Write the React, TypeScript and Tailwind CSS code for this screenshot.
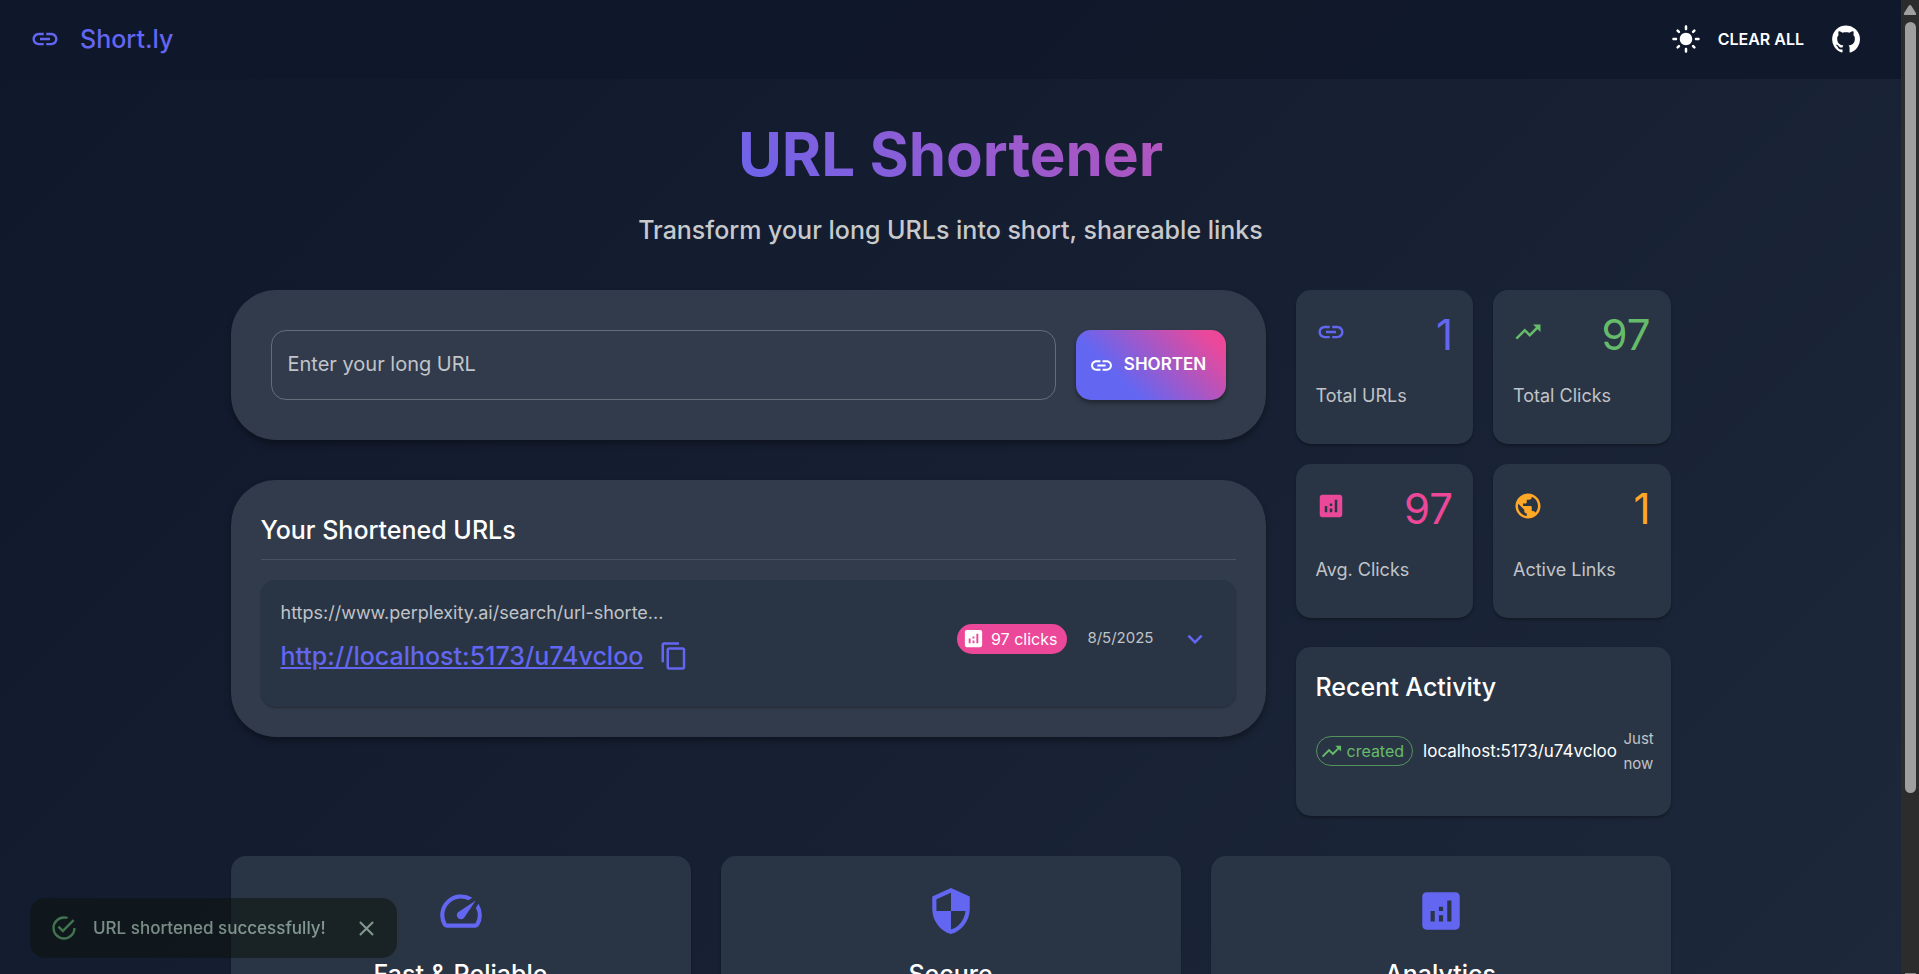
import type { ReactNode } from "react";
import {
  MdInsertLink,
  MdLightMode,
  MdTrendingUp,
  MdAnalytics,
  MdPublic,
  MdContentCopy,
  MdExpandMore,
  MdSpeed,
  MdSecurity,
  MdClose,
} from "react-icons/md";

function GitHubIcon() {
  return (
    <svg viewBox="0 0 24 24" className="size-[30px]" fill="currentColor" aria-hidden="true">
      <path d="M12 1.27a11 11 0 00-3.48 21.46c.55.09.73-.28.73-.55v-1.84c-3.03.64-3.67-1.46-3.67-1.46-.55-1.29-1.28-1.65-1.28-1.65-.92-.65.1-.65.1-.65 1.1 0 1.73 1.1 1.73 1.1.92 1.65 2.57 1.2 3.21.92a2 2 0 01.64-1.47c-2.47-.27-5.04-1.19-5.04-5.5 0-1.1.46-2.1 1.2-2.84a3.76 3.76 0 010-2.93s.91-.28 3.11 1.1c1.8-.49 3.7-.49 5.5 0 2.1-1.38 3.02-1.1 3.02-1.1a3.76 3.76 0 01.1 2.93c.83.74 1.2 1.74 1.2 2.94 0 4.21-2.57 5.13-5.04 5.4.45.37.82.92.82 2.02v3.03c0 .27.1.64.73.55A11 11 0 0012 1.27" />
    </svg>
  );
}

function SuccessIcon() {
  return (
    <svg viewBox="0 0 24 24" className="size-7 text-[#66bb6a]" fill="currentColor" aria-hidden="true">
      <path d="M20,12A8,8 0 0,1 12,20A8,8 0 0,1 4,12A8,8 0 0,1 12,4C12.76,4 13.5,4.11 14.2,4.31L15.77,2.74C14.61,2.26 13.34,2 12,2A10,10 0 0,0 2,12A10,10 0 0,0 12,22A10,10 0 0,0 22,12M7.91,10.08L6.5,11.5L11,16L21,6L19.59,4.58L11,13.17L7.91,10.08Z" />
    </svg>
  );
}

function Header() {
  return (
    <header className="flex h-[79px] items-center bg-[#0f172a]/90 px-[30px] pb-0.5">
      <div className="flex flex-1 items-center gap-5 text-[#6366f1]">
        <MdInsertLink className="size-[30px]" />
        <span className="text-[25px] leading-10 font-medium">Short.ly</span>
      </div>
      <div className="flex items-center text-white">
        <button type="button" aria-label="Toggle theme" className="flex size-[50px] items-center justify-center">
          <MdLightMode className="size-[30px]" />
        </button>
        <button type="button" className="px-[7px] text-[16px] leading-[30px] font-semibold uppercase">
          Clear All
        </button>
        <a href="https://github.com" aria-label="GitHub" className="ml-2.5 flex size-[50px] items-center justify-center">
          <GitHubIcon />
        </a>
      </div>
    </header>
  );
}

function ShortenForm() {
  return (
    <form className="flex gap-5 rounded-[45px] bg-[#323b4b] p-10 shadow-[0_4px_6px_rgba(0,0,0,0.35)]">
      <input
        type="text"
        aria-label="Enter your long URL"
        placeholder="Enter your long URL"
        className="h-[70px] min-w-0 flex-1 rounded-[15px] border border-white/25 bg-transparent px-4 pb-0.5 text-[20px] text-white placeholder:text-[#c1c4c9]"
      />
      <button
        type="button"
        className="flex w-[150px] items-center justify-center gap-2.5 rounded-[15px] bg-[linear-gradient(45deg,#6366f1_30%,#ec4899_90%)] pr-1.5 text-[17px] font-semibold text-white uppercase shadow-[0_3px_4px_rgba(0,0,0,0.35)]"
      >
        <MdInsertLink className="size-[25px]" />
        Shorten
      </button>
    </form>
  );
}

function UrlList() {
  return (
    <section className="rounded-[45px] bg-[#323b4b] p-[30px] shadow-[0_4px_6px_rgba(0,0,0,0.35)]">
      <h2 className="border-b border-white/12 pb-[9px] text-[25px] leading-10 font-medium text-white">
        Your Shortened URLs
      </h2>
      <article className="mt-5 flex h-[127px] items-center rounded-[15px] bg-[#293544] pr-4 pb-2.5 pl-5 shadow-[0_1px_2px_rgba(0,0,0,0.3)]">
        <div className="min-w-0 flex-1 pt-[3px]">
          <p className="text-[18px] leading-[25px] text-[#c0c3c8]">https://www.perplexity.ai/search/url-shorte...</p>
          <div className="mt-1.5 flex items-center gap-1.5">
            <a href="http://localhost:5173/u74vcloo" className="text-[25px] leading-10 font-medium text-[#6366f1] underline">
              http://localhost:5173/u74vcloo
            </a>
            <button type="button" aria-label="Copy link" className="flex size-[50px] items-center justify-center text-[#6366f1]">
              <MdContentCopy className="size-[30px]" />
            </button>
          </div>
        </div>
        <div className="flex items-center">
          <span className="flex h-[30px] items-center gap-1.5 rounded-full bg-[#ec4899] pr-2.5 pl-[5px] text-[16px] text-white">
            <MdAnalytics className="size-[23px]" />
            97 clicks
          </span>
          <time dateTime="2025-08-05" className="ml-5 text-[15px] text-[#c0c3c8]">
            8/5/2025
          </time>
          <button type="button" aria-label="Expand" className="ml-4 flex size-[50px] items-center justify-center text-[#6366f1]">
            <MdExpandMore className="size-[30px]" />
          </button>
        </div>
      </article>
    </section>
  );
}

const stats = [
  { label: "Total URLs", value: "1", icon: <MdInsertLink className="size-[30px]" />, tone: "text-[#6366f1]" },
  { label: "Total Clicks", value: "97", icon: <MdTrendingUp className="size-[30px]" />, tone: "text-[#66bb6a]" },
  { label: "Avg. Clicks", value: "97", icon: <MdAnalytics className="size-[30px]" />, tone: "text-[#ec4899]" },
  { label: "Active Links", value: "1", icon: <MdPublic className="size-[30px]" />, tone: "text-[#ffa726]" },
];

function Stats() {
  return (
    <div className="grid grid-cols-2 gap-5">
      {stats.map((s) => (
        <div key={s.label} className="rounded-[15px] bg-[#293544] px-5 pt-5 pb-9 shadow-[0_2px_3px_rgba(0,0,0,0.3)]">
          <div className={`flex justify-between ${s.tone}`}>
            <span className="pt-[7px]">{s.icon}</span>
            <span className="text-[42px] leading-[50px]">{s.value}</span>
          </div>
          <p className="mt-[23px] text-[18px] leading-[25px] text-[#c0c3c8]">{s.label}</p>
        </div>
      ))}
    </div>
  );
}

function RecentActivity() {
  return (
    <section className="mt-[29px] h-[169px] rounded-[15px] bg-[#293544] pt-5 pr-[15px] pl-5 shadow-[0_2px_3px_rgba(0,0,0,0.3)]">
      <h2 className="text-[25px] leading-10 font-medium text-white">Recent Activity</h2>
      <div className="mt-[19px] flex items-center">
        <span className="flex h-[30px] items-center gap-1 rounded-full border border-[#66bb6a]/70 pr-2 pl-[3px] text-[16px] text-[#66bb6a]">
          <MdTrendingUp className="size-[23px]" />
          created
        </span>
        <span className="ml-2.5 flex-1 text-[17px] leading-[25px] text-white">localhost:5173/u74vcloo</span>
        <span className="w-8 text-[15px] leading-[25px] text-[#c0c3c8]">Just now</span>
      </div>
    </section>
  );
}

function Feature({ icon, title }: { icon: ReactNode; title: string }) {
  return (
    <div className="flex h-[240px] flex-col items-center rounded-[15px] bg-[#293544] pt-[30px] shadow-[0_2px_3px_rgba(0,0,0,0.3)]">
      <span className="text-[#6366f1]">{icon}</span>
      <h3 className="mt-[18px] text-[25px] leading-10 font-medium text-white">{title}</h3>
    </div>
  );
}

function Toast() {
  return (
    <div
      role="alert"
      className="absolute bottom-4 left-[30px] flex h-[60px] items-center rounded-[15px] bg-[#0c130d] pr-[15px] pl-5 text-[#cce8cd] opacity-55"
    >
      <SuccessIcon />
      <span className="ml-[15px] pt-0.5 text-[17px] font-medium">URL shortened successfully!</span>
      <button type="button" aria-label="Close" className="ml-[26px] flex size-[30px] items-center justify-center">
        <MdClose className="size-[25px]" />
      </button>
    </div>
  );
}

function Scrollbar() {
  return (
    <div aria-hidden="true" className="flex w-[18px] shrink-0 flex-col items-center bg-[#2c2c2c] pt-[5px]">
      <svg viewBox="0 0 14 10" className="h-2.5 w-3.5" fill="#9f9f9f">
        <path d="M7 0c.6 0 1 .3 1.300.700l4.600 7.200c.6 1 .1 2.100-1 2.100H2.100c-1.100 0-1.600-1.100-1-2.100L5.700.700C6 .3 6.400 0 7 0z" />
      </svg>
      <div className="mt-[7px] h-[79.6%] w-[11px] rounded-full bg-[#9f9f9f]" />
      <div className="mt-auto h-px w-[11px] bg-[#8a8a8a]" />
    </div>
  );
}

export default function App() {
  return (
    <div className="relative flex h-screen overflow-hidden font-['Inter',sans-serif]">
      <div className="min-w-0 flex-1 overflow-hidden">
        <div className="min-h-[1175px] bg-[linear-gradient(135deg,#0f172a_0%,#1e293b_100%)]">
          <Header />
          <main className="mx-auto max-w-[1440px] pt-[39px]">
            <h1 className="bg-[linear-gradient(45deg,#6366f1_30%,#ec4899_90%)] bg-clip-text text-center text-[60px] leading-[72px] font-bold text-transparent">
              URL Shortener
            </h1>
            <p className="mt-5 text-center text-[25px] leading-10 font-medium text-[#c7c9cc]">
              Transform your long URLs into short, shareable links
            </p>
            <div className="mt-10 flex items-start gap-[30px]">
              <div className="flex min-w-0 flex-1 flex-col gap-10">
                <ShortenForm />
                <UrlList />
              </div>
              <div className="w-[375px] shrink-0">
                <Stats />
                <RecentActivity />
              </div>
            </div>
            <div className="mt-10 grid grid-cols-3 gap-[30px]">
              <Feature icon={<MdSpeed className="size-[50px]" />} title="Fast & Reliable" />
              <Feature icon={<MdSecurity className="size-[50px]" />} title="Secure" />
              <Feature icon={<MdAnalytics className="size-[50px]" />} title="Analytics" />
            </div>
          </main>
        </div>
      </div>
      <Scrollbar />
      <Toast />
    </div>
  );
}
